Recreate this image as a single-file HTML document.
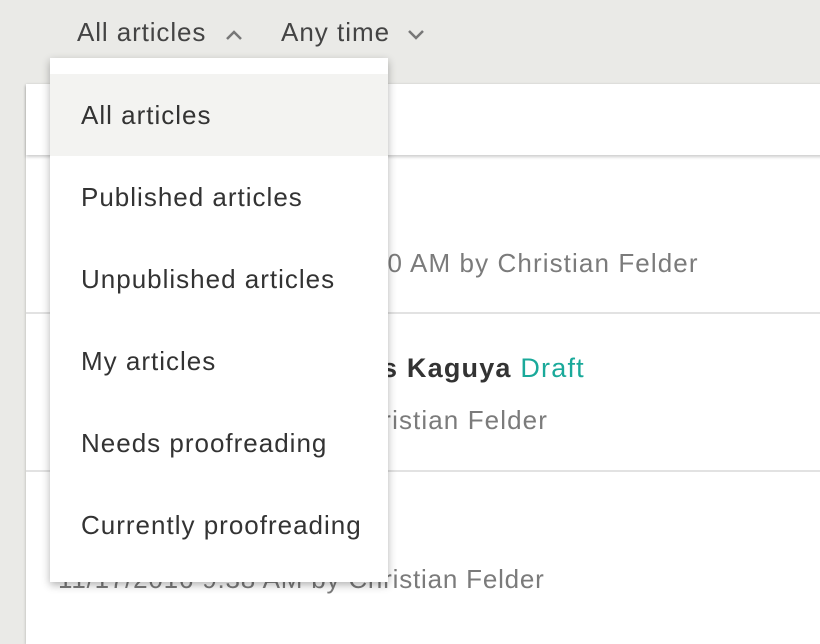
<!DOCTYPE html>
<html><head><style>
*{margin:0;padding:0;box-sizing:border-box}
body{width:820px;height:624px;background:#eaeae7;font-family:"Liberation Sans",sans-serif;position:relative;overflow:hidden;color:#3a3a3a}
.t{position:absolute;white-space:nowrap;line-height:1}
.card{position:absolute;left:26px;top:84px;width:800px;height:560px;background:#fff;box-shadow:0 1px 3px rgba(0,0,0,.25)}
.head{position:absolute;left:26px;top:84px;width:800px;height:71px;background:#fff;box-shadow:0 2px 3px rgba(0,0,0,.2)}
.line{position:absolute;left:26px;width:800px;height:2px;background:#e2e2e2}
.meta{color:#7b7b7b;font-size:26px;letter-spacing:1.1px}
.dd{position:absolute;left:50px;top:58px;width:338px;height:524px;background:#fff;box-shadow:0 3px 8px rgba(0,0,0,.3)}
.it{position:absolute;left:0;width:338px;height:82px;font-size:26px;letter-spacing:1px;color:#333;padding-left:31px;line-height:82px;white-space:nowrap}
</style></head><body>
<div class="t" style="left:77px;top:19px;font-size:26px;letter-spacing:0.9px;color:#444">All articles</div>
<svg style="position:absolute;left:224px;top:28px" width="20" height="14"><path d="M3 11 L10 4 L17 11" fill="none" stroke="#777" stroke-width="2.5"/></svg>
<div class="t" style="left:281px;top:19px;font-size:26px;letter-spacing:1px;color:#444">Any time</div>
<svg style="position:absolute;left:406px;top:28px" width="20" height="14"><path d="M3 3 L10 10 L17 3" fill="none" stroke="#777" stroke-width="2.5"/></svg>
<div class="card"></div>
<div class="head"></div>
<div class="line" style="top:312px"></div>
<div class="line" style="top:470px"></div>
<div class="t meta" style="left:372px;top:250px">00 AM by Christian Felder</div>
<div class="t" style="left:382px;top:355px;font-size:27px;letter-spacing:1.2px;font-weight:bold;color:#333">s Kaguya <span style="font-weight:normal;color:#1aa99a">Draft</span></div>
<div class="t meta" style="right:272px;top:407px">Christian Felder</div>
<div class="t meta" style="left:58px;top:566px;letter-spacing:0.8px">11/17/2016 9:38 AM by Christian Felder</div>
<div class="dd">
<div class="it" style="top:16px;background:#f3f3f1">All articles</div>
<div class="it" style="top:98px">Published articles</div>
<div class="it" style="top:180px">Unpublished articles</div>
<div class="it" style="top:262px">My articles</div>
<div class="it" style="top:344px">Needs proofreading</div>
<div class="it" style="top:426px">Currently proofreading</div>
</div>
</body></html>
